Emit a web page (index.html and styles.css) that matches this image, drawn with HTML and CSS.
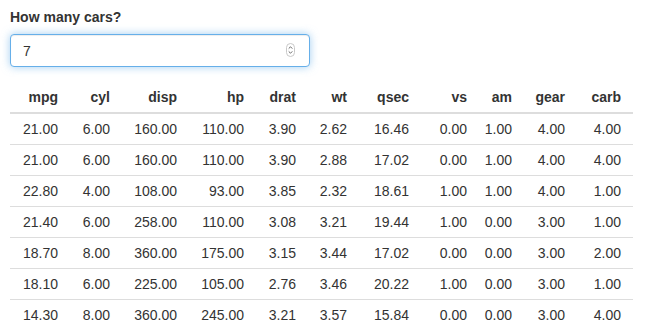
FILE: index.html
```html
<!DOCTYPE html>
<html lang="en">
<head>
    <meta charset="UTF-8">
    <meta name="viewport" content="width=device-width, initial-scale=1.0">
    <title>How many cars?</title>
    <link rel="stylesheet" href="styles.css">
</head>
<body>

<div class="container">
    <div class="form-group">
        <label class="control-label" for="n">How many cars?</label>
        <div class="input-wrap">
            <input type="text" id="n" class="form-control" value="7">
            <!-- spinner like the browser's own number arrows -->
            <svg class="spinner" width="9" height="14" viewBox="0 0 9 14">
                <rect x="0.5" y="0.5" width="8" height="13" rx="4" fill="#fff" stroke="#c8c8c8"/>
                <path d="M2.7 5.6 L4.5 3.8 L6.3 5.6" fill="none" stroke="#555" stroke-width="0.9"/>
                <path d="M2.7 8.4 L4.5 10.2 L6.3 8.4" fill="none" stroke="#555" stroke-width="0.9"/>
            </svg>
        </div>
    </div>

    <table class="table shiny-table">
        <colgroup>
            <col class="c1"><col class="c2"><col class="c3"><col class="c4">
            <col class="c5"><col class="c6"><col class="c7"><col class="c8">
            <col class="c9"><col class="c10"><col class="c11">
        </colgroup>
        <thead>
            <tr>
                <th>mpg</th><th>cyl</th><th>disp</th><th>hp</th><th>drat</th><th>wt</th>
                <th>qsec</th><th>vs</th><th>am</th><th>gear</th><th>carb</th>
            </tr>
        </thead>
        <tbody id="rows"></tbody>
    </table>
</div>

<script>
    let cars = [
        [21.0, 6, 160, 110, 3.90, 2.620, 16.46, 0, 1, 4, 4],
        [21.0, 6, 160, 110, 3.90, 2.875, 17.02, 0, 1, 4, 4],
        [22.8, 4, 108, 93, 3.85, 2.320, 18.61, 1, 1, 4, 1],
        [21.4, 6, 258, 110, 3.08, 3.215, 19.44, 1, 0, 3, 1],
        [18.7, 8, 360, 175, 3.15, 3.440, 17.02, 0, 0, 3, 2],
        [18.1, 6, 225, 105, 2.76, 3.460, 20.22, 1, 0, 3, 1],
        [14.3, 8, 360, 245, 3.21, 3.570, 15.84, 0, 0, 3, 4]
    ];

    function renderTable(n) {
        let tbody = document.getElementById("rows");
        tbody.innerHTML = "";
        cars.slice(0, n).forEach(car => {
            let tr = document.createElement("tr");
            car.forEach(v => {
                let td = document.createElement("td");
                td.innerText = v.toFixed(2);
                tr.appendChild(td);
            });
            tbody.appendChild(tr);
        });
    }

    document.addEventListener("DOMContentLoaded", () => {
        let input = document.getElementById("n");
        renderTable(parseInt(input.value));
        input.oninput = () => renderTable(parseInt(input.value) || 0);
    });
</script>

</body>
</html>
```

FILE: styles.css
```css
* {
    box-sizing: border-box;
}

body {
    font-family: "Liberation Sans", Arial, sans-serif;
    font-size: 14px;
    line-height: 20px;
    color: #333;
    background: #fff;
    margin: 0;
}

.container {
    padding: 7px 10px 0 10px;
}

.form-group {
    margin-bottom: 15px;
}

.control-label {
    display: block;
    font-weight: bold;
    margin-bottom: 7px;
}

.input-wrap {
    position: relative;
    width: 300px;
}

.form-control {
    display: block;
    width: 300px;
    height: 33px;
    padding: 6px 12px;
    font-family: inherit;
    font-size: 14px;
    color: #333;
    background: #fff;
    border: 1px solid #66afe9;
    border-radius: 4px;
    outline: 0;
    box-shadow: inset 0 1px 1px rgba(0, 0, 0, 0.075), 0 0 8px rgba(102, 175, 233, 0.6);
}

.spinner {
    position: absolute;
    right: 15px;
    top: 9px;
}

.table {
    border-collapse: collapse;
    table-layout: fixed;
    width: 623px;
}

.table th,
.table td {
    padding: 5px 8px;
    text-align: right;
    line-height: 20px;
}

.table th {
    font-weight: bold;
    border-bottom: 2px solid #ddd;
}

.table td {
    border-top: 1px solid #ddd;
}

.table th:last-child,
.table td:last-child {
    padding-right: 12px;
}

.c1 { width: 56px; }
.c2 { width: 52px; }
.c3 { width: 67px; }
.c4 { width: 67px; }
.c5 { width: 52px; }
.c6 { width: 51px; }
.c7 { width: 62px; }
.c8 { width: 58px; }
.c9 { width: 45px; }
.c10 { width: 53px; }
.c11 { width: 60px; }
```
